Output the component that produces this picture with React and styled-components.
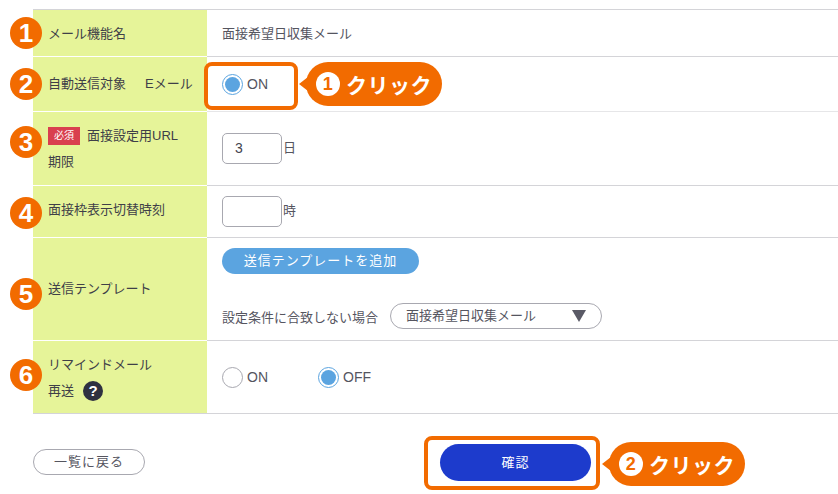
import styled, { createGlobalStyle } from 'styled-components';

const GlobalStyle = createGlobalStyle`
  html, body {
    margin: 0;
    padding: 0;
    background: #fff;
    overflow: hidden;
  }
  body {
    font-family: "Liberation Sans", "Noto Sans CJK JP", sans-serif;
    color: #4a4a55;
  }
`;

const Page = styled.div`
  width: 838px;
  height: 494px;
  padding: 9px 0 0 33px;
  box-sizing: border-box;
  position: relative;
  overflow: hidden;
`;

const Table = styled.div`
  border-top: 1px solid #d4d4d8;
`;

const Row = styled.div`
  display: grid;
  grid-template-columns: 174px 1fr;
  box-sizing: border-box;
  height: ${p => p.$h}px;
  border-bottom: 1px solid ${p => p.$line || '#d4d4d8'};
  position: relative;
`;

const Label = styled.div`
  background: #e6f499;
  margin-bottom: -1px;
  border-bottom: 1px solid ${p => p.$last ? '#d4d4d8' : '#fff'};
  padding: ${p => p.$pt || 0}px 0 ${p => p.$pb || 0}px 15px;
  display: flex;
  flex-direction: column;
  justify-content: center;
  font-size: 13px;
  line-height: 26px;
  color: #3f3f48;
  white-space: pre;
`;

const LabelLine = styled.div`
  display: flex;
  align-items: center;
  gap: ${p => p.$gap || 0}px;
`;

const Value = styled.div`
  padding-left: 15px;
  display: flex;
  align-items: center;
  font-size: 13px;
  color: #55555f;
`;

const ValueText = styled.span`
  margin-bottom: 2px;
`;

const Unit = styled.span`
  margin-bottom: 4px;
`;

const Stack = styled.div`
  padding: 10px 0 0 15px;
  font-size: 13px;
  color: #55555f;
`;

const Badge = styled.div`
  position: absolute;
  left: -23px;
  top: ${p => p.$top}px;
  width: 32px;
  height: 32px;
  border-radius: 50%;
  background: #f26b00;
  color: #fff;
  font: 700 26px/32px "Liberation Sans", sans-serif;
  text-align: center;
`;

const Required = styled.span`
  display: inline-block;
  width: 32px;
  height: 18px;
  margin: 0 7px 0 0;
  background: #d9404f;
  color: #fff;
  font-size: 10px;
  line-height: 18px;
  text-align: center;
`;

const RadioGroup = styled.div`
  display: flex;
  align-items: center;
  width: ${p => p.$w}px;
  font: 14px "Liberation Sans", sans-serif;
  color: #55555f;
  gap: 4px;
`;

const Radio = styled.span`
  width: 21px;
  height: 21px;
  box-sizing: border-box;
  border-radius: 50%;
  border: 1px solid ${p => p.$on ? '#5ba4e0' : '#a8a8b0'};
  display: flex;
  align-items: center;
  justify-content: center;
  &::after {
    content: '';
    display: ${p => p.$on ? 'block' : 'none'};
    width: 15px;
    height: 15px;
    border-radius: 50%;
    background: #5ba4e0;
  }
`;

const NumberBox = styled.div`
  width: 60px;
  height: 31px;
  box-sizing: border-box;
  border: 1px solid #a8a8b0;
  border-radius: 5px;
  padding-left: 12px;
  font: 14px/29px "Liberation Sans", sans-serif;
  letter-spacing: 0.5px;
  color: #44444e;
  margin-right: 1px;
`;

const AddButton = styled.div`
  width: 197px;
  height: 26px;
  border-radius: 13px;
  background: #5ba4e0;
  color: #fff;
  font-size: 13px;
  line-height: 26px;
  letter-spacing: 1px;
  text-align: center;
`;

const Condition = styled.div`
  display: flex;
  align-items: center;
  margin-top: 29px;
`;

const Select = styled.div`
  width: 212px;
  height: 26px;
  margin-left: 12px;
  box-sizing: border-box;
  border: 1px solid #a8a8b0;
  border-radius: 13px;
  padding: 0 15px 0 15px;
  display: flex;
  align-items: center;
  justify-content: space-between;
  line-height: 24px;
`;

const Arrow = styled.span`
  width: 0;
  height: 0;
  border-left: 7px solid transparent;
  border-right: 7px solid transparent;
  border-top: 12px solid #5a5a66;
`;

const HelpIcon = styled.span`
  width: 20px;
  height: 20px;
  margin-left: 9px;
  border-radius: 50%;
  background: #2f3140;
  color: #fff;
  font: 700 15px/20px "Liberation Sans", sans-serif;
  text-align: center;
`;

const Footer = styled.div`
  display: flex;
  align-items: flex-start;
  padding-top: 35px;
`;

const BackButton = styled.div`
  width: 112px;
  height: 26px;
  box-sizing: border-box;
  border: 1px solid #a8a8b0;
  border-radius: 13px;
  font-size: 13px;
  line-height: 24px;
  letter-spacing: 1px;
  text-align: center;
  color: #55555f;
`;

const ConfirmButton = styled.div`
  width: 151px;
  height: 37px;
  margin: -5px 0 0 295px;
  border-radius: 19px;
  background: #1d3bcc;
  color: #fff;
  font-size: 13px;
  line-height: 38px;
  letter-spacing: 1px;
  text-align: center;
`;

const Highlight = styled.div`
  position: absolute;
  left: ${p => p.$x}px;
  top: ${p => p.$y}px;
  width: ${p => p.$w}px;
  height: ${p => p.$h}px;
  box-sizing: border-box;
  border: 4px solid #f26b00;
  border-radius: 8px;
`;

const Callout = styled.div`
  position: absolute;
  left: ${p => p.$x}px;
  top: ${p => p.$y}px;
  height: 44px;
  width: 136px;
  box-sizing: border-box;
  padding-left: 10px;
  border-radius: 22px;
  background: #f26b00;
  color: #fff;
  display: flex;
  align-items: center;
  gap: 6px;
  font-size: 21px;
  font-weight: 700;
  letter-spacing: 0.5px;
  &::before {
    content: '';
    position: absolute;
    left: -7px;
    top: 15px;
    border-top: 7px solid transparent;
    border-bottom: 7px solid transparent;
    border-right: 9px solid #f26b00;
  }
`;

const CalloutNum = styled.span`
  width: 24px;
  height: 24px;
  border-radius: 50%;
  background: #fff;
  color: #f26b00;
  font: 700 18px/24px "Liberation Sans", sans-serif;
  text-align: center;
`;

export default function App() {
  return (
    <Page>
      <GlobalStyle />
      <Table>
        <Row $h={47}>
          <Badge $top={7}>1</Badge>
          <Label $pt={2}>メール機能名</Label>
          <Value><ValueText>面接希望日収集メール</ValueText></Value>
        </Row>
        <Row $h={55} $line="#e6e6e8">
          <Badge $top={11}>2</Badge>
          <Label>
            <LabelLine $gap={19}><span>自動送信対象</span><span>Eメール</span></LabelLine>
          </Label>
          <Value>
            <RadioGroup $w={60}><Radio $on />ON</RadioGroup>
          </Value>
        </Row>
        <Row $h={74}>
          <Badge $top={14}>3</Badge>
          <Label>
            <LabelLine><Required>必須</Required>面接設定用URL</LabelLine>
            <LabelLine>期限</LabelLine>
          </Label>
          <Value><NumberBox>3</NumberBox><Unit>日</Unit></Value>
        </Row>
        <Row $h={52}>
          <Badge $top={11}>4</Badge>
          <Label $pb={4}>面接枠表示切替時刻</Label>
          <Value><NumberBox /><Unit>時</Unit></Value>
        </Row>
        <Row $h={103}>
          <Badge $top={40}>5</Badge>
          <Label>送信テンプレート</Label>
          <Stack>
            <AddButton>送信テンプレートを追加</AddButton>
            <Condition>
              設定条件に合致しない場合
              <Select>面接希望日収集メール<Arrow /></Select>
            </Condition>
          </Stack>
        </Row>
        <Row $h={73}>
          <Badge $top={18}>6</Badge>
          <Label $last $pt={2}>
            <LabelLine>リマインドメール</LabelLine>
            <LabelLine>再送<HelpIcon>?</HelpIcon></LabelLine>
          </Label>
          <Value>
            <RadioGroup $w={96}><Radio />ON</RadioGroup>
            <RadioGroup $w={60}><Radio $on />OFF</RadioGroup>
          </Value>
        </Row>
      </Table>
      <Footer>
        <BackButton>一覧に戻る</BackButton>
        <ConfirmButton>確認</ConfirmButton>
      </Footer>
      <Highlight $x={204} $y={62} $w={94} $h={48} />
      <Callout $x={306} $y={62}><CalloutNum>1</CalloutNum>クリック</Callout>
      <Highlight $x={424} $y={436} $w={176} $h={54} />
      <Callout $x={609} $y={442}><CalloutNum>2</CalloutNum>クリック</Callout>
    </Page>
  );
}
